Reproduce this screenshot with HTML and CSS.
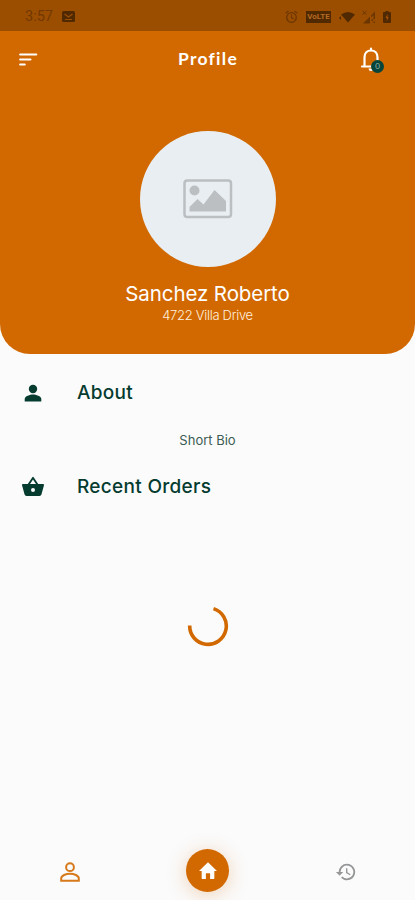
FILE: index.html
```html
<!DOCTYPE html>
<html lang="en">
<head>
<meta charset="utf-8">
<meta name="viewport" content="width=device-width, initial-scale=1">
<title>Profile</title>
<link rel="stylesheet" href="styles.css">
</head>
<body>
<div class="screen">
  <header class="hero">
    <div class="status">
      <span class="clock">3:57</span>
      <svg class="mail" width="13" height="11" viewBox="0 0 13 11"><rect width="13" height="11" rx="1.5" fill="currentColor"/><path d="M2.5 3l4 3 4-3M3 8.5h7" fill="none" stroke="#9c4e00" stroke-width="1.2"/></svg>
      <div class="indicators">
        <svg width="13" height="14" viewBox="0 0 13 14" fill="none" stroke="#6b3500"><circle cx="6.5" cy="7.5" r="4.8" stroke-width="1.3"/><path d="M.7 3.2L3.5 1M12.300 3.200L9.500 1M6.500 4.500v3.200l2.200 1.300" stroke-width="1.100"/></svg>
        <span class="volte">VoLTE</span>
        <svg class="wifi" width="16" height="12" viewBox="0 0 16 12" fill="currentColor"><path d="M2 3.500Q9 -1.500 16 3.500L9 11.500z"/><path d="M0 7l2-2v4z"/></svg>
        <svg class="signal" width="14" height="14" viewBox="0 0 14 14" fill="#6b3500"><path d="M1 13.500L8 6.500v7zM9 5.500l4-4v7l-1.500 1.500v-5l-2.500 2.500zM9.500 9.500h1.500v1.500h-1.500zM11.500 11.500h1.500v1.500h-1.500z"/><path d="M.5 1l4 3.500M4.500 1l-4 3.500" stroke="#6b3500"/></svg>
        <svg class="battery" width="8" height="12" viewBox="0 0 8 12"><path d="M2.500 0h3v1H7q1 0 1 1v9q0 1-1 1H1q-1 0-1-1V2q0-1 1-1h1.500z" fill="currentColor"/><path d="M4.500 3L2.500 7h1.300v3l2-4H4.500z" fill="#a65100"/></svg>
      </div>
    </div>
    <div class="bar">
      <svg class="menu" width="19" height="14" viewBox="0 0 19 14" stroke="#fff" stroke-width="2.200" stroke-linecap="round"><path d="M1.200 1.500h16M1.200 6.500h10.200M1.200 11.500h4.500"/></svg>
      <h1>Profile</h1>
      <div class="bell">
        <svg width="22" height="25" viewBox="0 0 22 25"><path d="M2 19.500h18M4.500 19V10.500C4.500 6 7.200 3.500 11 3.500s6.500 2.500 6.500 7V19M11 1.500v2" fill="none" stroke="#fff" stroke-width="2.200" stroke-linecap="round" stroke-linejoin="round"/><path d="M8.500 21.500h5q-.3 2.500-2.500 2.500t-2.500-2.500" fill="#fff"/></svg>
        <span class="badge">0</span>
      </div>
    </div>
    <div class="avatar">
      <svg width="50" height="40" viewBox="0 0 50 40"><rect x="1.500" y="1.500" width="46.500" height="36.500" rx="2.800" fill="none" stroke="#bcbfc1" stroke-width="2.500"/><circle cx="11.500" cy="11.500" r="5" fill="#bcbfc1"/><path d="M6.500 32.500V28l8-8 6 5.500L31.500 11 43 22v10.500z" fill="#bcbfc1"/></svg>
    </div>
    <div class="name">Sanchez Roberto</div>
    <div class="address">4722 Villa Drive</div>
  </header>
  <main>
    <section class="row">
      <svg width="24" height="24" viewBox="0 0 24 24" fill="#063b30"><circle cx="12" cy="8" r="4.200"/><path d="M3.700 20.500V18c0-3 5.500-4.600 8.300-4.600s8.300 1.600 8.300 4.600v2.500z"/></svg>
      <h2>About</h2>
    </section>
    <p class="bio">Short Bio</p>
    <section class="row">
      <svg width="24" height="24" viewBox="0 0 24 24" fill="#063b30"><path fill-rule="evenodd" d="M17.210 9l-4.380-6.560a1 1 0 0 0-1.660 0L6.790 9H2c-.550 0-1 .450-1 1l.04.270 2.540 9.270A2 2 0 0 0 5.500 21h13a2 2 0 0 0 1.930-1.460l2.540-9.270L23 10c0-.550-.450-1-1-1zM9 9l3-4.400L15 9zm3 8a2 2 0 1 1 0-4 2 2 0 0 1 0 4z"/></svg>
      <h2>Recent Orders</h2>
    </section>
    <div class="loading">
      <svg width="42" height="42" viewBox="0 0 42 42"><path d="M26.500 3.600A18.300 18.300 0 1 1 2.700 20.500" fill="none" stroke="#d26900" stroke-width="3.600"/></svg>
    </div>
  </main>
  <nav>
    <div class="tab side"><svg width="20" height="20" viewBox="0 0 20 20" fill="none" stroke="#d77a1c" stroke-width="2"><circle cx="10" cy="5.200" r="3.900"/><path d="M1.200 18.700v-2.200c0-3 4.800-4.700 8.800-4.700s8.800 1.700 8.800 4.700v2.200z"/></svg></div>
    <div class="tab"><div class="home"><svg width="20" height="19" viewBox="0 0 18 18" fill="#fff"><path d="M9 1.200L17.500 9.500H15V16.300q0 .7-.7.700H11v-5.500H7V17H3.700q-.7 0-.7-.700V9.500H.5z"/></svg></div></div>
    <div class="tab side"><svg width="22" height="22" viewBox="0 0 24 24" fill="#949698"><path d="M13 3a9 9 0 0 0-9 9H1l3.890 3.890.07.140L9 12H6a7 7 0 1 1 2.060 4.940l-1.420 1.420A9 9 0 1 0 13 3zm-1 5v5l4.280 2.540.720-1.210-3.500-2.080V8z"/></svg></div>
  </nav>
</div>
</body>
</html>
```
FILE: styles.css
```css
* { box-sizing: border-box; }
body { margin: 0; background: #fbfbfb; font-family: Lato, sans-serif; }
h1, h2, p { margin: 0; }
svg { display: block; flex: none; }
.screen { height: 900px; display: flex; flex-direction: column; overflow: hidden; }
.hero {
  height: 354px;
  flex: none;
  background: #d26900;
  border-radius: 0 0 30px 30px;
  color: #fff;
  display: flex;
  flex-direction: column;
  align-items: center;
}
.status {
  width: 100%;
  height: 31px;
  background: #9c4e00;
  color: #512900;
  display: flex;
  align-items: center;
  padding: 2px 24px 0 25px;
}
.clock { width: 37px; font: 14.5px/18px Roboto, sans-serif; color: #713800; }
.indicators { margin-left: auto; display: flex; align-items: center; }
.volte {
  width: 25px;
  height: 12px;
  margin-left: 8px;
  background: #512900;
  color: #b66a20;
  font: bold 8px/12px Roboto, sans-serif;
  text-align: center;
}
.wifi { margin-left: 8px; }
.signal { margin-left: 7px; }
.battery { margin-left: 7px; }
.bar {
  width: 100%;
  height: 57px;
  display: grid;
  grid-template-columns: 1fr auto 1fr;
  align-items: center;
  padding: 0 33px 0 19px;
}
h1 { font-size: 17.5px; line-height: 24px; font-weight: 700; letter-spacing: 1.25px; padding: 0 0 2px 15px; }
.bell { position: relative; width: 22px; height: 25px; justify-self: end; }
.badge {
  position: absolute;
  left: 11px;
  top: 13px;
  width: 13px;
  height: 13px;
  border-radius: 50%;
  background: #07453b;
  color: #9ab5ae;
  font-size: 8px;
  line-height: 13px;
  text-align: center;
}
.avatar {
  width: 136px;
  height: 136px;
  margin: 43px 0 0 1px;
  border-radius: 50%;
  background: #e9eef2;
  display: grid;
  place-items: center;
}
.name { margin-top: 13px; font: 400 20.5px/28px Inter, sans-serif; letter-spacing: -.1px; white-space: nowrap; }
.address { font: 300 13px/15px Inter, sans-serif; letter-spacing: -.3px; color: #fff0df; }
main { flex: 1; padding-top: 19px; }
.row { height: 40px; display: flex; align-items: center; gap: 32px; padding-left: 21px; }
h2 { font: 500 19px/26px Inter, sans-serif; letter-spacing: .3px; color: #063b30; padding-bottom: 1px; }
.bio { height: 54px; padding-top: 18px; text-align: center; font: 400 13px/18px Inter, sans-serif; color: #3c5b52; }
.loading { display: flex; justify-content: center; margin-top: 98px; }
nav { height: 60px; flex: none; display: grid; grid-template-columns: repeat(3, 1fr); align-items: center; }
.tab { display: flex; justify-content: center; padding-left: 1px; }
.side { padding-top: 4px; }
.home {
  width: 43px;
  height: 43px;
  border-radius: 50%;
  background: #d26900;
  display: grid;
  place-items: center;
  box-shadow: 0 3px 20px rgba(210, 105, 0, .28);
}
```
